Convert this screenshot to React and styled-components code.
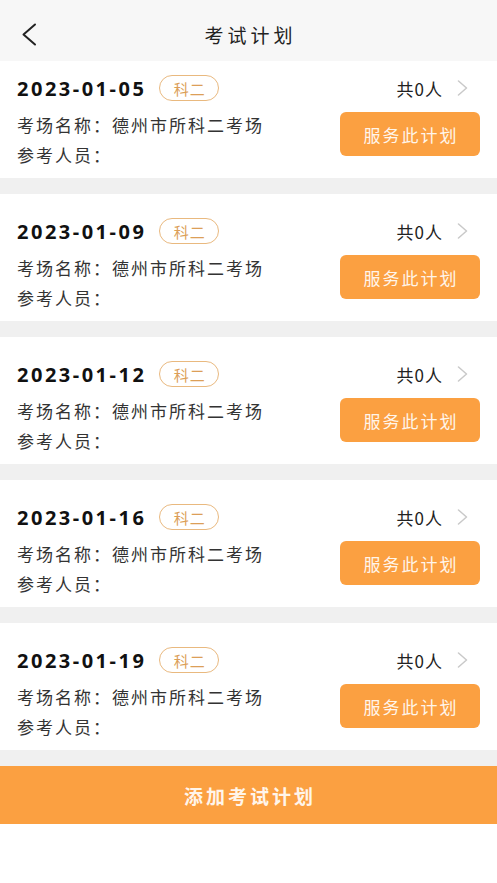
import React from 'react'
import styled, { createGlobalStyle } from 'styled-components'

const GlobalStyle = createGlobalStyle`
  html, body {
    margin: 0;
    padding: 0;
    background: #fff;
    font-family: "Noto Sans CJK SC", "Noto Sans", sans-serif;
    color: #222;
  }
`

const Page = styled.div`
  width: 497px;
  min-height: 883px;
  display: flex;
  flex-direction: column;
  background: #fff;
`

const Header = styled.header`
  height: 61px;
  box-sizing: border-box;
  padding-top: 8px;
  background: #f7f7f7;
  display: grid;
  grid-template-columns: 80px 1fr 80px;
  align-items: center;
`

const Back = styled.button`
  border: 0;
  background: none;
  padding: 0 0 0 21px;
  display: flex;
  align-items: center;
  cursor: pointer;
`

const Title = styled.h1`
  margin: 0;
  font-size: 19px;
  font-weight: 400;
  letter-spacing: 4px;
  text-indent: 4px;
  text-align: center;
  color: #222;
`

const List = styled.div`
  display: flex;
  flex-direction: column;
  gap: 16px;
  padding-bottom: 16px;
  background: #f0f0f0;
`

const Card = styled.div`
  background: #fff;
  padding: 23px 17px 8px 17px;
  display: grid;
  grid-template-columns: 1fr auto;

  &:first-child {
    padding-top: 13px;
  }
`

const Left = styled.div`
  display: flex;
  flex-direction: column;
`

const Right = styled.div`
  display: flex;
  flex-direction: column;
  align-items: flex-end;
`

const DateRow = styled.div`
  height: 28px;
  margin-bottom: 8px;
  display: flex;
  align-items: center;
`

const DateText = styled.span`
  font-family: "Noto Sans", "Noto Sans CJK SC", sans-serif;
  font-size: 20px;
  font-weight: 700;
  letter-spacing: 2.5px;
  color: #111;
`

const Tag = styled.span`
  margin-left: 13px;
  flex: none;
  width: 60px;
  height: 26px;
  box-sizing: border-box;
  border: 1px solid #e9b97f;
  border-radius: 13px;
  display: flex;
  align-items: center;
  justify-content: center;
  font-size: 15px;
  letter-spacing: 1px;
  text-indent: 1px;
  color: #dc9f58;
`

const InfoLine = styled.div`
  height: 30px;
  line-height: 30px;
  font-size: 17px;
  letter-spacing: 2px;
  color: #333;
  white-space: nowrap;
`

const Count = styled.div`
  height: 28px;
  display: flex;
  align-items: center;
  padding-right: 12px;
  font-size: 17px;
  letter-spacing: 1px;
  color: #222;

  svg {
    margin-left: 14px;
  }
`

const ServeButton = styled.button`
  margin-top: 10px;
  width: 140px;
  height: 44px;
  border: 0;
  border-radius: 6px;
  background: #fba041;
  color: #fff5ea;
  font-family: "Noto Sans CJK SC", sans-serif;
  font-size: 17px;
  letter-spacing: 2px;
  text-indent: 2px;
  cursor: pointer;
`

const AddBar = styled.button`
  height: 58px;
  border: 0;
  background: #fba041;
  color: #fff5ea;
  font-family: "Noto Sans CJK SC", sans-serif;
  font-size: 19px;
  font-weight: 700;
  letter-spacing: 3px;
  text-indent: 3px;
  cursor: pointer;
`

const plans = ['2023-01-05', '2023-01-09', '2023-01-12', '2023-01-16', '2023-01-19']

const BackIcon = () => (
  <svg width="16" height="23" viewBox="0 0 16 23">
    <polyline points="14,1.5 2.5,11.5 14,21.5" fill="none" stroke="#222" strokeWidth="2" strokeLinecap="round" strokeLinejoin="round" />
  </svg>
)

const Chevron = () => (
  <svg width="11" height="16" viewBox="0 0 11 16">
    <polyline points="1.5,1 9.5,8 1.5,15" fill="none" stroke="#c9c9c9" strokeWidth="1.5" strokeLinecap="round" strokeLinejoin="round" />
  </svg>
)

const App = () => (
  <Page>
    <GlobalStyle />
    <Header>
      <Back aria-label="返回"><BackIcon /></Back>
      <Title>考试计划</Title>
      <span />
    </Header>
    <List>
      {plans.map(date => (
        <Card key={date}>
          <Left>
            <DateRow>
              <DateText>{date}</DateText>
              <Tag>科二</Tag>
            </DateRow>
            <InfoLine>考场名称：德州市所科二考场</InfoLine>
            <InfoLine>参考人员：</InfoLine>
          </Left>
          <Right>
            <Count>共0人<Chevron /></Count>
            <ServeButton>服务此计划</ServeButton>
          </Right>
        </Card>
      ))}
    </List>
    <AddBar>添加考试计划</AddBar>
  </Page>
)

export default App
